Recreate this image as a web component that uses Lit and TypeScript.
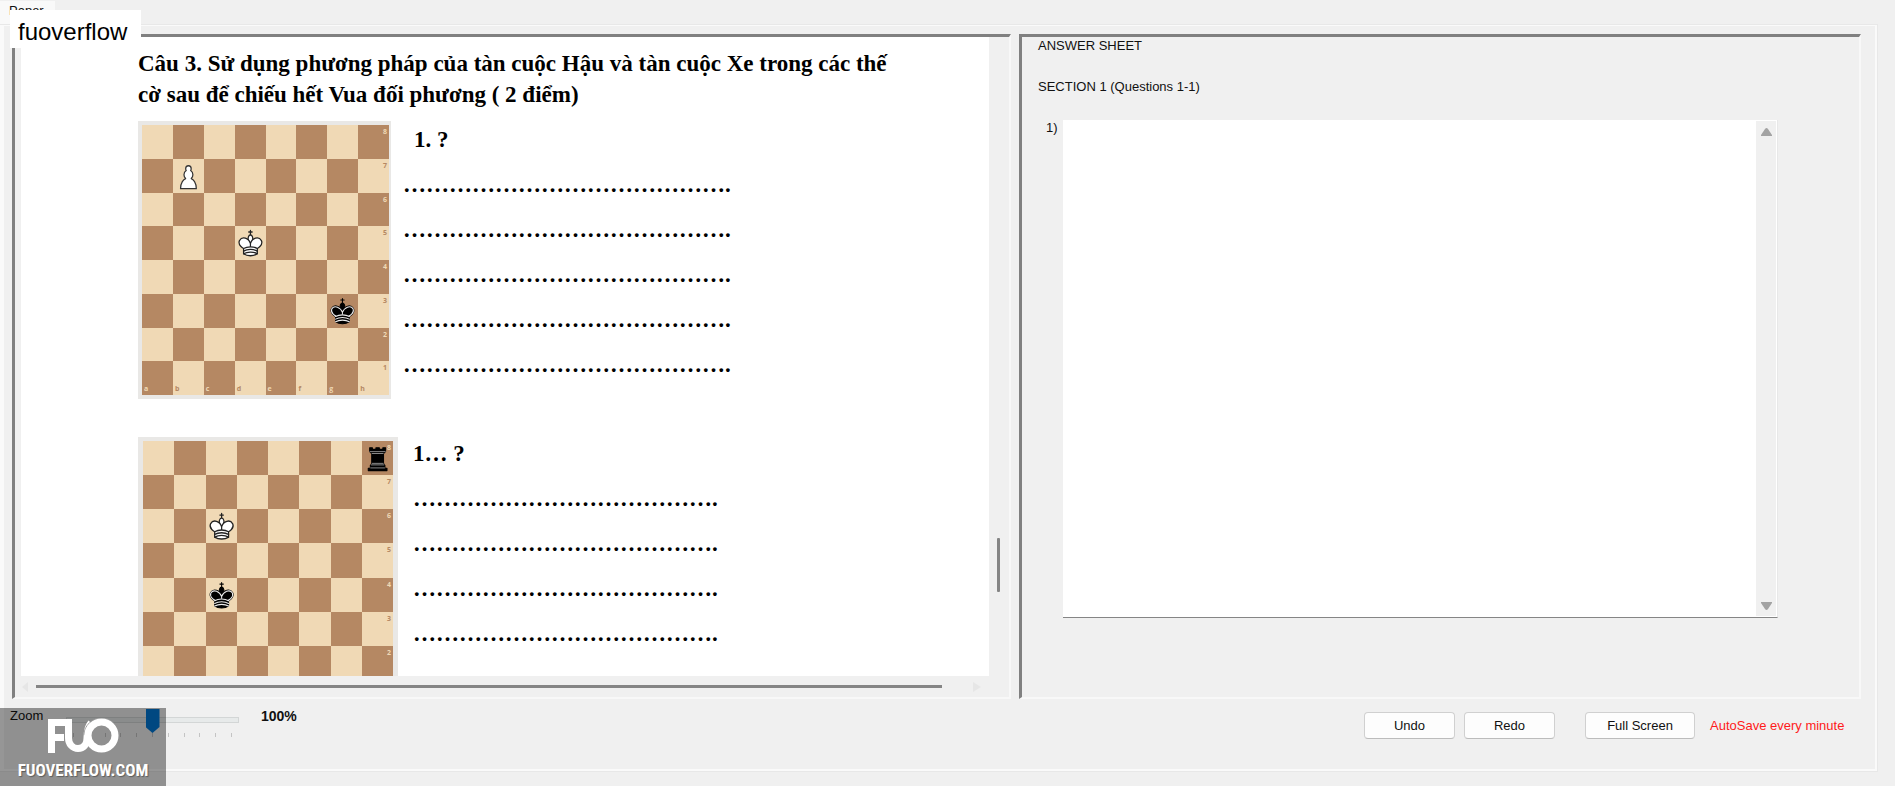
import { LitElement, html, css, svg, nothing } from "lit";
import { customElement, property, state } from "lit/decorators.js";
import { classMap } from "lit/directives/class-map.js";

const KING_CROSS = "M22.5 11.63V6M20 8h5";
const KING_HEAD = "M22.5 25s4.5-7.5 3-10.5c0 0-1-2.5-3-2.5s-3 2.5-3 2.5c-1.5 3 3 10.5 3 10.5";
const KING_BODY =
  "M12.5 37c5.5 3.5 14.5 3.5 20 0v-7s9-4.5 6-10.5c-4-6.5-13.5-3.5-16 4V27v-3.5c-2.5-7.5-12-10.5-16-4-3 6 6 10.5 6 10.5v7";
const KING_BANDS = "M12.5 30c5.5-3 14.5-3 20 0m-20 3.5c5.5-3 14.5-3 20 0m-20 3.5c5.5-3 14.5-3 20 0";

const pieces: Record<string, unknown> = {
  K: svg`<g fill="#fff" stroke="#222" stroke-width="1.8" stroke-linejoin="round" stroke-linecap="round">
    <path d=${KING_CROSS} /><path d=${KING_HEAD} /><path d=${KING_BODY} /><path fill="none" d=${KING_BANDS} /></g>`,
  k: svg`<g fill="#000" stroke="#000" stroke-width="1.5" stroke-linejoin="round" stroke-linecap="round">
    <path d=${KING_CROSS} /><path d=${KING_HEAD} /><path d=${KING_BODY} />
    <path fill="none" stroke="#ececec" d="M32 29.5s8.5-4 6.03-9.65C34.15 14 25 18 22.5 24.5v2.1-2.1C20 18 10.85 14 6.97 19.85 4.5 25.5 13 29.5 13 29.5" />
    <path fill="none" stroke="#ececec" d=${KING_BANDS} /></g>`,
  P: svg`<path fill="#fff" stroke="#333" stroke-width="1.8" stroke-linejoin="round"
    d="M22.5 9c-2.21 0-4 1.79-4 4 0 .89.29 1.71.78 2.38C17.33 16.5 16 18.59 16 21c0 2.03.94 3.84 2.41 5.03C15.41 27.09 11 31.58 11 39.5h23c0-7.92-4.41-12.41-7.41-13.47C28.06 24.84 29 23.03 29 21c0-2.41-1.33-4.5-3.28-5.62.49-.67.78-1.49.78-2.38 0-2.21-1.79-4-4-4z" />`,
  r: svg`<g fill="#000" stroke="#000" stroke-width="1.5" stroke-linejoin="round">
    <path d="M9 39h27v-3H9v3zM12.5 32l1.5-2.5h17l1.5 2.5h-20zM12 36v-4h21v4H12zM14 29.5v-13h17v13H14zM14 16.5L11 14h23l-3 2.5H14zM11 14V9h4v2h5V9h5v2h5V9h4v5H11z" />
    <path fill="none" stroke="#bbb" stroke-width="1" d="M12 35.5h21M13 31.5h19M14 29.5h17M14 16.5h17M11 14h23" /></g>`,
};

@customElement("chess-board")
class ChessBoard extends LitElement {
  @property({ attribute: false }) placement: Record<string, string> = {};

  static styles = css`
    :host { display: block; box-sizing: border-box; background: #e9e8e6; }
    .grid {
      display: grid; height: 100%;
      grid-template-columns: repeat(8, 1fr); grid-template-rows: repeat(8, 1fr);
      font: bold 7px/8px "Open Sans", sans-serif;
    }
    .square { position: relative; background: #f0d9b5; color: #b58863; min-width: 0; min-height: 0; }
    .dark { background: #b58863; color: #f0d9b5; }
    .piece { display: block; width: 100%; height: 100%; }
    .rank { position: absolute; top: 3px; right: 2px; }
    .file { position: absolute; bottom: 2px; left: 2px; }
  `;

  render() {
    const squares = [];
    for (let rank = 8; rank >= 1; rank--) {
      for (let col = 0; col < 8; col++) {
        const file = "abcdefgh"[col];
        const piece = this.placement[file + rank];
        squares.push(html`<div class=${classMap({ square: true, dark: (rank + col) % 2 === 1 })}>
          ${piece
            ? html`<svg class="piece" viewBox="0 0 45 45" preserveAspectRatio="none" aria-hidden="true">${pieces[piece]}</svg>`
            : nothing}
          ${col === 7 ? html`<span class="rank">${rank}</span>` : nothing}
          ${rank === 1 ? html`<span class="file">${file}</span>` : nothing}
        </div>`);
      }
    }
    return html`<div class="grid">${squares}</div>`;
  }
}

@customElement("exam-paper")
class ExamPaper extends LitElement {
  static styles = css`
    :host {
      display: block; box-sizing: border-box; overflow: hidden; background: #fff; color: #000;
      padding: 11px 0 0 117px; font: bold 23px/31px "Liberation Serif", serif;
    }
    .title { margin: 0 0 7px; font: inherit; white-space: nowrap; }
    .problem { display: flex; align-items: flex-start; }
    .second { margin-top: 32px; }
    .board { flex: none; width: 253px; height: 278px; margin-top: 4px; padding: 4px 2px 4px 4px; }
    .second .board { width: 260px; height: 281px; margin-top: 6px; padding: 4px 5px 4px 5px; }
    .lines { margin: 0 0 0 12px; padding: 0; list-style: none; line-height: 45px; white-space: nowrap; }
    .move { padding-left: 11px; }
    .second .lines { margin-left: 15px; }
    .second .move { padding-left: 0; }
  `;

  render() {
    const first = "…".repeat(14) + ".";
    const second = "…".repeat(13) + ".";
    return html`
      <h1 class="title">Câu 3. Sử dụng phương pháp của tàn cuộc Hậu và tàn cuộc Xe trong các thế<br />cờ sau để chiếu hết Vua đối phương ( 2 điểm)</h1>
      <section class="problem">
        <chess-board class="board" .placement=${{ b7: "P", d5: "K", g3: "k" }}></chess-board>
        <ul class="lines">
          <li class="move">1. ?</li>
          ${Array.from({ length: 5 }, () => html`<li>${first}</li>`)}
        </ul>
      </section>
      <section class="problem second">
        <chess-board class="board" .placement=${{ h8: "r", c6: "K", c4: "k" }}></chess-board>
        <ul class="lines">
          <li class="move">1… ?</li>
          ${Array.from({ length: 4 }, () => html`<li>${second}</li>`)}
        </ul>
      </section>
    `;
  }
}

@customElement("app-root")
class AppRoot extends LitElement {
  @state() private zoom = 100;

  static styles = css`
    :host {
      display: flex; flex-direction: column; box-sizing: border-box; position: relative;
      height: 100vh; min-height: 480px; padding: 1px 18px 15px 0; overflow: hidden;
      background: #f0f0f0; color: #111; font: 13px/18px "Liberation Sans", sans-serif;
    }
    .tab {
      align-self: flex-start; box-sizing: border-box; width: 55px; height: 24px; padding: 2px 0 6px 9px;
      border: 0; background: #f9f9f9; color: #111; font: 13px/14px "Liberation Sans", sans-serif; text-align: left;
    }
    .sheet {
      flex: 1; min-height: 0; display: flex; flex-direction: column;
      border: solid #fafafa; border-width: 1px 2px 2px 4px; outline: 1px solid #e8e8e8;
      padding: 8px 14px 0 8px;
    }
    .panes { flex: 1; min-height: 0; display: grid; grid-template-columns: 999fr 842fr; gap: 8px; }
    .pane {
      min-width: 0; min-height: 0; box-sizing: border-box;
      border: solid; border-width: 3px 2px 2px 3px; border-color: #808080 #f8f8f8 #f8f8f8 #808080;
    }
    .viewer { display: grid; grid-template: 1fr 21px / 1fr 20px; padding-left: 6px; }
    .paper { min-width: 0; min-height: 0; }
    .vbar { padding: 501px 8px 0 8px; }
    .vthumb { height: 54px; width: 3px; border-radius: 1px; background: #858585; }
    .hbar { display: flex; align-items: center; justify-content: space-between; gap: 8px; padding: 0 8px 0 1px; }
    .hthumb { flex: 1; height: 3px; margin-right: 23px; background: #858585; }
    .arrow { flex: none; display: block; fill: #e6e6e6; }
    .answers { padding: 0 81px 0 16px; }
    .line { margin: 0; padding-bottom: 23px; }
    .answer { display: flex; padding-left: 8px; }
    .number { width: 17px; }
    .field {
      flex: 1; display: flex; box-sizing: border-box; height: 498px; margin-top: 1px;
      background: #fff; border: solid #e8e8e8; border-width: 0 1px 1px 0; border-bottom-color: #858585;
    }
    .text { flex: 1; min-width: 0; border: 0; outline: 0; resize: none; padding: 4px; background: #fff; font: inherit; }
    .scroll {
      box-sizing: border-box; width: 20px; margin: 1px; padding: 7px 0 6px; background: #f0f0f0;
      display: flex; flex-direction: column; align-items: center; justify-content: space-between;
    }
    .scroll .arrow { fill: #a3a3a3; }
    .footer { flex: none; height: 70px; display: flex; justify-content: space-between; align-items: flex-start; }
    .zoom { display: flex; padding-top: 8px; }
    .caption { width: 56px; margin-left: -2px; }
    .slider { width: 173px; }
    .range { display: block; appearance: none; width: 173px; height: 26px; margin: 0; background: none; }
    .range::-webkit-slider-runnable-track {
      box-sizing: border-box; height: 6px; background: #e7eaea; border: 1px solid #d3d6d6;
    }
    .range::-webkit-slider-thumb {
      appearance: none; width: 14px; height: 24px; margin-top: -9px; background: #0078d7;
      clip-path: polygon(0 0, 100% 0, 100% 75%, 50% 100%, 0 75%);
    }
    .ticks { display: flex; justify-content: space-between; padding: 0 7px; }
    .tick { width: 1px; height: 4px; background: #c4c4c4; }
    .percent { margin-left: 22px; font-weight: bold; font-size: 14px; }
    .actions { display: flex; align-items: center; padding: 13px 0 0; }
    .button {
      box-sizing: border-box; width: 91px; height: 27px; margin-right: 9px; padding: 0;
      background: #fdfdfd; border: 1px solid #d0d0d0; border-bottom-color: #bcbcbc; border-radius: 4px;
      color: #111; font: inherit;
    }
    .wide { width: 110px; margin: 0 15px 0 21px; }
    .autosave { width: 151px; color: #ff1a1a; }
    .name {
      position: absolute; left: 10px; top: 10px; box-sizing: border-box; width: 131px; height: 38px;
      padding-left: 8px; background: #fff; color: #000; font: 24px/43px "Liberation Sans", sans-serif;
    }
    .brand {
      position: absolute; left: 0; bottom: 0; box-sizing: border-box; width: 166px; height: 78px;
      padding-top: 10px; background: rgba(0, 0, 0, 0.4); color: #fff; text-align: center;
      font: bold 17px/20px "Liberation Sans Narrow", "Roboto Condensed", "Liberation Sans", sans-serif;
      text-shadow: 1px 1px 1px rgba(0, 0, 0, 0.35);
    }
    .logo { display: block; margin: 0 auto 7px; }
  `;

  private onZoom(e: Event) {
    this.zoom = Number((e.target as HTMLInputElement).value);
  }

  render() {
    return html`
      <button class="tab">Paper</button>
      <main class="sheet">
        <div class="panes">
          <div class="pane viewer">
            <exam-paper class="paper"></exam-paper>
            <div class="vbar"><div class="vthumb"></div></div>
            <div class="hbar">
              <svg class="arrow" width="6" height="10" viewBox="0 0 6 10"><path d="M6 0v10L0 5z" /></svg>
              <div class="hthumb"></div>
              <svg class="arrow" width="8" height="10" viewBox="0 0 8 10"><path d="M0 0v10l8-5z" /></svg>
            </div>
          </div>
          <div class="pane answers">
            <p class="line">ANSWER SHEET</p>
            <p class="line">SECTION 1 (Questions 1-1)</p>
            <div class="answer">
              <label class="number" for="answer">1)</label>
              <div class="field">
                <textarea class="text" id="answer"></textarea>
                <div class="scroll">
                  <svg class="arrow" width="11" height="8" viewBox="0 0 11 8"><path d="M0 8V7l4-6q1.500-2 3 0l4 6v1z" /></svg>
                  <svg class="arrow" width="11" height="8" viewBox="0 0 11 8"><path d="M0 0v1l4 6q1.500 2 3 0l4-6V0z" /></svg>
                </div>
              </div>
            </div>
          </div>
        </div>
        <div class="footer">
          <div class="zoom">
            <label class="caption" for="zoom">Zoom</label>
            <div class="slider">
              <input class="range" id="zoom" type="range" min="0" max="200" step="20" .value=${String(this.zoom)} @input=${this.onZoom} />
              <div class="ticks">${Array.from({ length: 11 }, () => html`<i class="tick"></i>`)}</div>
            </div>
            <output class="percent" for="zoom">${this.zoom}%</output>
          </div>
          <div class="actions">
            <button class="button">Undo</button>
            <button class="button">Redo</button>
            <button class="button wide">Full Screen</button>
            <span class="autosave">AutoSave every minute</span>
          </div>
        </div>
      </main>
      <div class="name">fuoverflow</div>
      <div class="brand">
        <svg class="logo" width="72" height="35" viewBox="0 0 72 35" fill="none" stroke="#fff" stroke-width="7" role="img" aria-label="FUO">
          <path d="M4.500 35V4.500H20M4.500 19.500H17" />
          <path d="M21.500 1v19c0 6 4 10.500 9.500 10.500s9-4 9-10.500c0-8 1-12 4-15" />
          <circle cx="54.500" cy="17.500" r="17.500" stroke="#999" stroke-width="1" stroke-dasharray="0 55 40 55" />
          <circle cx="54.500" cy="17.500" r="13.500" />
        </svg>
        FUOVERFLOW.COM
      </div>
    `;
  }
}
